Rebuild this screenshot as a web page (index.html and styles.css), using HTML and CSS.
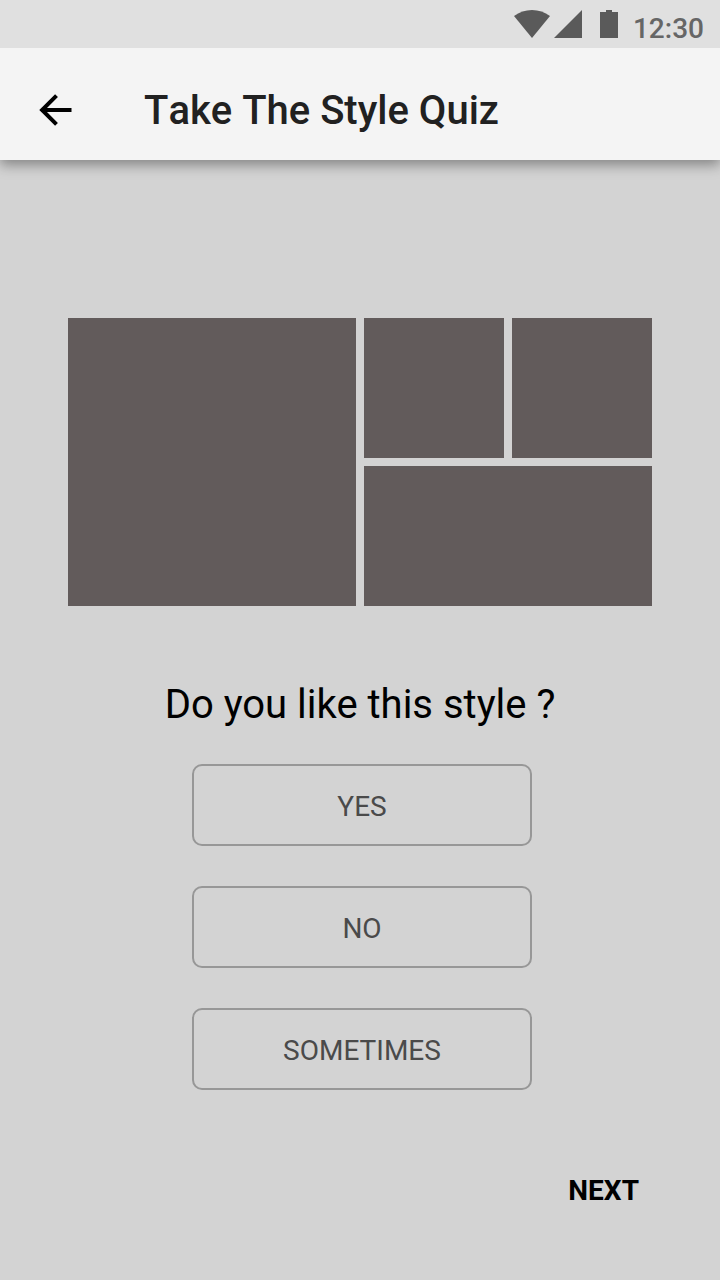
FILE: index.html
```html
<!DOCTYPE html>
<html lang="en">
<head>
  <meta charset="utf-8">
  <title>Take The Style Quiz</title>
  <link rel="stylesheet" href="styles.css">
</head>
<body>
  <div class="status-bar">
    <svg class="status-icons" width="104" height="28" viewBox="0 0 104 28" aria-hidden="true">
      <path d="M0 6C5.300 2 11.300 0 18 0s12.700 2 18 6L18 28z"/>
      <path d="M40 28L68 0v28z"/>
      <path d="M86 2h6V0h6v2h6v26H86z"/>
    </svg>
    <span class="clock">12:30</span>
  </div>
  <header class="app-bar">
    <a class="back" href="#" aria-label="Back">
      <svg width="33" height="32" viewBox="0 0 33 32" aria-hidden="true">
        <path d="M17.500 1.600L3.100 16L17.500 30.400M3.100 16H32.500"/>
      </svg>
    </a>
    <h1 class="title">Take The Style Quiz</h1>
  </header>
  <main class="quiz">
    <div class="mosaic">
      <div class="tile tile-large"></div>
      <div class="tile"></div>
      <div class="tile"></div>
      <div class="tile tile-wide"></div>
    </div>
    <h2 class="question">Do you like this style ?</h2>
    <div class="answers">
      <button class="answer">YES</button>
      <button class="answer">NO</button>
      <button class="answer">SOMETIMES</button>
    </div>
    <button class="next">NEXT</button>
  </main>
</body>
</html>
```
FILE: styles.css
```css
* {
  box-sizing: border-box;
}

body {
  margin: 0;
  height: 1280px;
  display: flex;
  flex-direction: column;
  overflow: hidden;
  background: #d3d3d3;
  color: #000;
  font-family: Roboto, sans-serif;
}

.status-bar {
  position: relative;
  z-index: 1;
  height: 48px;
  padding: 10px 16px 0 0;
  display: flex;
  justify-content: flex-end;
  align-items: flex-start;
  gap: 15px;
  background: #e0e0e0;
}

.status-icons {
  fill: #5a5a5a;
}

.clock {
  padding-top: 2px;
  font-size: 28px;
  font-weight: 500;
  line-height: 33px;
  color: #666;
}

.app-bar {
  height: 112px;
  padding: 12px 0 0 39px;
  display: flex;
  align-items: center;
  gap: 72px;
  background: #f4f4f4;
  box-shadow: 0 5px 12px rgba(0, 0, 0, 0.37);
}

.back {
  display: flex;
}

.back path {
  fill: none;
  stroke: #000;
  stroke-width: 4;
}

.title {
  margin: 0;
  padding-top: 2px;
  font-size: 40px;
  font-weight: 500;
  line-height: 48px;
  font-kerning: none;
  color: #212121;
}

.quiz {
  padding: 158px 68px 0;
  display: flex;
  flex-direction: column;
}

.mosaic {
  height: 288px;
  display: grid;
  grid-template-columns: 288px 140px 140px;
  grid-template-rows: 140px 140px;
  gap: 8px;
}

.tile {
  background: #625b5b;
}

.tile-large {
  grid-row: span 2;
}

.tile-wide {
  grid-column: span 2;
}

.question {
  margin: 75px 0 35px;
  font-size: 40px;
  font-weight: 400;
  line-height: 48px;
  text-align: center;
}

.answers {
  padding-left: 124px;
  display: flex;
  flex-direction: column;
  gap: 40px;
}

.answer {
  width: 340px;
  height: 82px;
  padding: 4px 0 0;
  border: 2px solid #979797;
  border-radius: 10px;
  background: none;
  font: 400 28px/32px Roboto, sans-serif;
  color: #4a4a4a;
}

.next {
  align-self: flex-end;
  margin: 85px 13px 0 0;
  padding: 0;
  border: 0;
  background: none;
  font: 700 28px/32px Roboto, sans-serif;
  color: #000;
}
```
